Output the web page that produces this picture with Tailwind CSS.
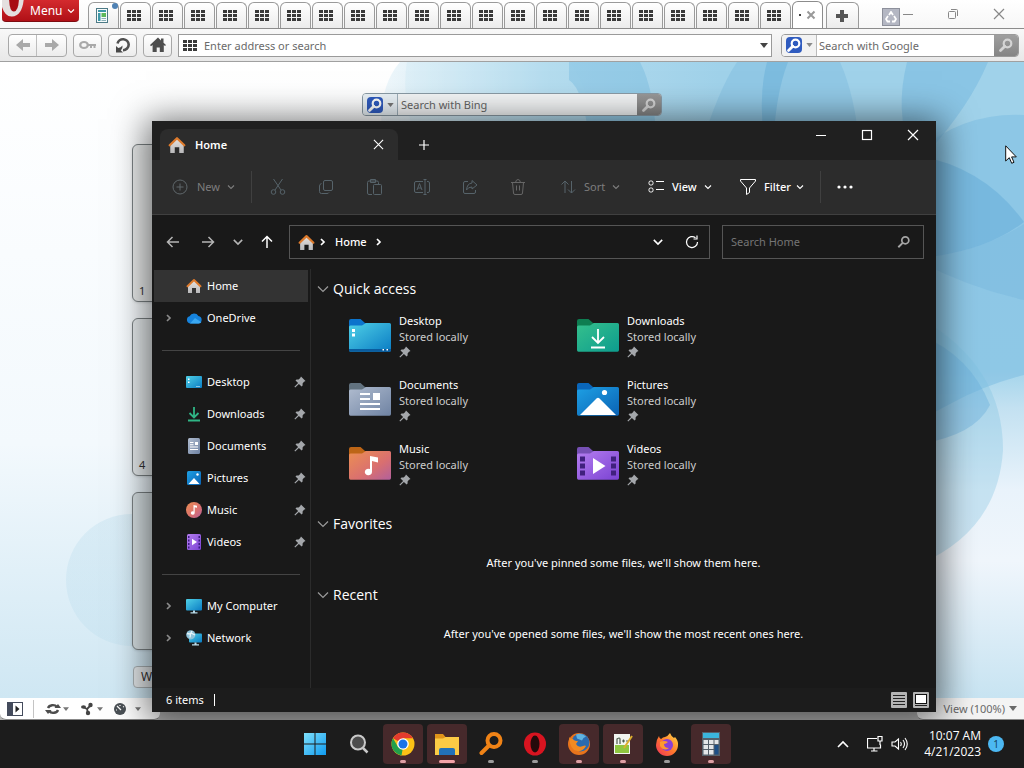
<!DOCTYPE html>
<html lang="en">
<head>
<meta charset="UTF-8">
<meta name="viewport" content="width=device-width, initial-scale=1.0">
<title>Home - File Explorer</title>
<script src="https://cdn.jsdelivr.net/npm/@tailwindcss/browser@4"></script>
</head>
<body class="h-screen flex flex-col overflow-hidden bg-[#1c1c1c] font-['Noto_Sans','Open_Sans',sans-serif] text-[11px] leading-4 text-white">

<!-- Icon sprite -->
<svg class="absolute size-0" aria-hidden="true">
  <defs>
    <linearGradient id="gDesk" x1="0" y1="0" x2="1" y2="1"><stop offset="0" stop-color="#4fd0e6"/><stop offset="1" stop-color="#0a7cc4"/></linearGradient>
    <linearGradient id="gDown" x1="0" y1="0" x2="1" y2="1"><stop offset="0" stop-color="#35c08c"/><stop offset="1" stop-color="#0d9c8e"/></linearGradient>
    <linearGradient id="gDocs" x1="0" y1="0" x2="1" y2="1"><stop offset="0" stop-color="#b0bccf"/><stop offset="1" stop-color="#6f83a3"/></linearGradient>
    <linearGradient id="gPics" x1="0" y1="0" x2="1" y2="1"><stop offset="0" stop-color="#1ea0e4"/><stop offset="1" stop-color="#0a62b4"/></linearGradient>
    <linearGradient id="gMusic" x1="0" y1="0" x2="1" y2="1"><stop offset="0" stop-color="#ec8f52"/><stop offset=".6" stop-color="#d96f70"/><stop offset="1" stop-color="#b2609c"/></linearGradient>
    <linearGradient id="gVids" x1="0" y1="0" x2="1" y2="1"><stop offset="0" stop-color="#b57ef0"/><stop offset="1" stop-color="#7a42d2"/></linearGradient>
    <linearGradient id="gWin" x1="0" y1="0" x2="1" y2="1"><stop offset="0" stop-color="#7fe0fb"/><stop offset="1" stop-color="#0f9bf0"/></linearGradient>
    <linearGradient id="gFox" x1="1" y1="0" x2="0" y2="1"><stop offset="0" stop-color="#ffe04a"/><stop offset=".5" stop-color="#ff7a2c"/><stop offset="1" stop-color="#f0305c"/></linearGradient>
    <linearGradient id="gHouse" x1="0" y1="0" x2="0" y2="1"><stop offset="0" stop-color="#e8e2de"/><stop offset="1" stop-color="#b9b9bb"/></linearGradient>
  </defs>
  <symbol id="grid9" viewBox="0 0 14 11"><path fill="#3a3a3a" d="M0 0h4v3H0zM5 0h4v3H5zM10 0h4v3h-4zM0 4h4v3H0zM5 4h4v3H5zM10 4h4v3h-4zM0 8h4v3H0zM5 8h4v3H5zM10 8h4v3h-4z"/></symbol>
  <symbol id="mag" viewBox="0 0 16 16"><circle cx="9.500" cy="6.500" r="3.800" fill="none" stroke="currentColor" stroke-width="2.200"/><path d="M6.800 9.200 2.500 13.500" stroke="currentColor" stroke-width="2.800" stroke-linecap="round"/></symbol>
  <symbol id="chevD" viewBox="0 0 10 10"><path d="M2 3.500 5 6.500 8 3.500" fill="none" stroke="currentColor" stroke-width="1.100"/></symbol>
  <symbol id="chevR" viewBox="0 0 10 10"><path d="M3 2 6 5 3 8" fill="none" stroke="currentColor" stroke-width="1.700"/></symbol>
  <symbol id="tri" viewBox="0 0 8 5"><path d="M0 0h8L4 5z" fill="currentColor"/></symbol>
  <symbol id="pin" viewBox="0 0 12 12"><path fill="#a4a7ab" d="M7 .5 11.500 5 10 5.800 8.600 7.400V9.500l-1 1L4.900 7.900 1.200 11.600.4 10.800 4.100 7.100 1.500 4.400l1-1H4.600L6.200 2z"/></symbol>
  <symbol id="close" viewBox="0 0 12 12"><path d="M1 1 11 11M11 1 1 11" fill="none" stroke="currentColor" stroke-width="1.200"/></symbol>
  <symbol id="house" viewBox="0 0 16 16"><path fill="url(#gHouse)" d="M2 7.500 8 2l6 5.500V15H10V10H6v5H2z"/><path d="M1.500 8.200 8 2l6.500 6.200" fill="none" stroke="#dd7a2c" stroke-width="2" stroke-linecap="round" stroke-linejoin="round"/></symbol>
  <symbol id="arrow" viewBox="0 0 14 14"><path d="M13 7H1.500M6.500 2 1.500 7l5 5" fill="none" stroke="currentColor" stroke-width="1.500"/></symbol>
  <symbol id="fatArrow" viewBox="0 0 14 12"><path d="M0 6 7 0v4h7v4H7v4z" fill="#a9a9a9"/></symbol>
  <symbol id="cloud" viewBox="0 0 16 12"><path fill="#1683dd" d="M4 11.500a3.700 3.700 0 0 1-.4-7.200A5 5 0 0 1 12.400 4a3.800 3.800 0 0 1 .1 7.500z"/><path fill="#3aa8f2" d="M4 11.500 9 6l6.300 4.300a3.800 3.800 0 0 1-2.800 1.200z"/></symbol>
  <symbol id="sDesk" viewBox="0 0 16 16"><rect y="2" width="16" height="12" rx="1" fill="url(#gDesk)"/><path fill="#fff" d="M2 4.500h1.500V6H2zM2 7.500h1.500V9H2zM10.500 12h1v1h-1zM12.500 12h1v1h-1z"/></symbol>
  <symbol id="sDown" viewBox="0 0 16 16"><path d="M8 1v10M3.500 7 8 11.500 12.500 7M2 14.500h12" fill="none" stroke="#2fb585" stroke-width="1.800"/></symbol>
  <symbol id="sDocs" viewBox="0 0 16 16"><rect x="2" width="12" height="16" rx="1.500" fill="url(#gDocs)"/><path fill="#fff" d="M4 4h3.500v1H4zM4 6.200h3.500v1H4zM9 4h3v3H9zM4 8.500h8v1H4zM4 11h8v1H4z"/></symbol>
  <symbol id="sPics" viewBox="0 0 16 16"><rect x="1" y="1" width="14" height="14" rx="1.500" fill="url(#gPics)"/><path fill="#fff" d="M2.500 14 8 8l5.500 6z"/><circle cx="11.500" cy="4.500" r="1.200" fill="#fff"/></symbol>
  <symbol id="sMusic" viewBox="0 0 16 16"><circle cx="8" cy="8" r="8" fill="url(#gMusic)"/><path fill="#fff" d="M7.500 3 11 3.800v2L8.700 5.200V11a1.900 1.700 0 1 1-1.200-1.600z"/></symbol>
  <symbol id="sVids" viewBox="0 0 16 16"><rect x="1" width="14" height="16" rx="1.500" fill="url(#gVids)"/><path fill="#3c1c80" d="M2 2h1.500v2H2zM2 5.500h1.500v2H2zM2 9h1.500v2H2zM2 12.500h1.500v2H2zM12.500 2H14v2h-1.500zM12.500 5.500H14v2h-1.500zM12.500 9H14v2h-1.500zM12.500 12.500H14v2h-1.500z"/><path fill="#fff" d="M6 4.800 11 8 6 11.200z"/></symbol>
  <symbol id="sPc" viewBox="0 0 16 16"><rect y="1" width="16" height="11.500" rx="1" fill="url(#gDesk)"/><path fill="#b9dcea" d="M7 12.500h2v2H7zM4.500 14.200h7v1.300h-7z"/></symbol>
  <symbol id="sNet" viewBox="0 0 16 16"><rect x="3" y="3.500" width="13" height="9" rx="1" fill="url(#gDesk)"/><path fill="#b9dcea" d="M8.500 12.500h2v2h-2zM6 14.200h7v1.300H6z"/><circle cx="4.800" cy="4.800" r="4.600" fill="#8fc3da"/><path d="M1 3.500 4.500 4 4 7.500M6 1l-1 2 4 2" fill="none" stroke="#e6f4fa" stroke-width="1.300"/></symbol>
  <symbol id="fDesk" viewBox="0 0 42 33"><path fill="#0c74cc" d="M0 2a2 2 0 0 1 2-2H11.500l4.500 4H40v10H0z"/><path fill="url(#gDesk)" d="M0 8q0-1.500 1.500-1.500H13L17 4H40.500Q42 4 42 5.500V31q0 1.700-1.500 1.700H1.500Q0 32.700 0 31z"/><path fill="#0a5c9e" d="M0 30h42v1.200q0 1.500-1.500 1.500H1.500Q0 32.700 0 31.200z"/><path fill="#fff" d="M3 10h3v3H3zM3 14.500h3v3H3zM33.500 30h1.500v1.500h-1.500zM37.500 30h1.500v1.500h-1.500z"/></symbol>
  <symbol id="fDown" viewBox="0 0 42 33"><path fill="#0e7d51" d="M0 2a2 2 0 0 1 2-2H11.500l4.500 4H40v10H0z"/><path fill="url(#gDown)" d="M0 8q0-1.500 1.500-1.500H13L17 4H40.500Q42 4 42 5.500V31q0 1.700-1.500 1.700H1.500Q0 32.700 0 31z"/><path d="M21 10v13.500M15 18l6 6 6-6M14 28.500h14" fill="none" stroke="#fff" stroke-width="1.800"/></symbol>
  <symbol id="fDocs" viewBox="0 0 42 33"><path fill="#62727f" d="M0 2a2 2 0 0 1 2-2H11.500l4.500 4H40v10H0z"/><path fill="url(#gDocs)" d="M0 8q0-1.500 1.500-1.500H13L17 4H40.500Q42 4 42 5.500V31q0 1.700-1.500 1.700H1.500Q0 32.700 0 31z"/><path fill="#fff" d="M11 10h10v2H11zM11 15h10v2H11zM24 10h7v7h-7zM11 20h20v2H11zM11 25h20v2H11z"/></symbol>
  <symbol id="fPics" viewBox="0 0 42 33"><path fill="#0a66ba" d="M0 2a2 2 0 0 1 2-2H11.500l4.500 4H40v10H0z"/><path fill="url(#gPics)" d="M0 8q0-1.500 1.500-1.500H13L17 4H40.500Q42 4 42 5.500V31q0 1.700-1.500 1.700H1.500Q0 32.700 0 31z"/><path fill="#fff" d="M3 32 19.500 15.500q1.500-1.500 3 0L39 32z"/><circle cx="27.500" cy="9.500" r="2.600" fill="#fff"/></symbol>
  <symbol id="fMusic" viewBox="0 0 42 33"><path fill="#bd6516" d="M0 2a2 2 0 0 1 2-2H11.500l4.500 4H40v10H0z"/><path fill="url(#gMusic)" d="M0 8q0-1.500 1.500-1.500H13L17 4H40.500Q42 4 42 5.500V31q0 1.700-1.500 1.700H1.500Q0 32.700 0 31z"/><path fill="#fff" d="M21 9 29 10.500v5L23 14V25a3.600 3.300 0 1 1-2-3z"/></symbol>
  <symbol id="fVids" viewBox="0 0 42 33"><path fill="#7650b4" d="M0 2a2 2 0 0 1 2-2H11.500l4.500 4H40v10H0z"/><path fill="url(#gVids)" d="M0 8q0-1.500 1.500-1.500H13L17 4H40.500Q42 4 42 5.500V31q0 1.700-1.500 1.700H1.500Q0 32.700 0 31z"/><path fill="#40207e" d="M3 9.500h5v5H3zM3 16.500h5v5H3zM3 23.500h5v5H3zM34 9.500h5v5h-5zM34 16.500h5v5h-5zM34 23.500h5v5h-5z"/><path fill="#fff" d="M16 11 28.500 19 16 27z"/></symbol>
</svg>

<!-- Browser window -->
<div class="relative flex-1 min-h-0 flex flex-col bg-white text-[#6a6a6a]">

  <!-- Tab strip -->
  <header class="flex h-[29px] shrink-0 items-end border-b border-[#8c8c8c] bg-gradient-to-b from-white to-[#f7f7f7]">
    <button class="ml-0.5 mr-[9px] flex h-[22px] w-[77px] shrink-0 items-center self-start overflow-hidden rounded-b-sm border-b border-[#7d0b10] bg-gradient-to-b from-[#d42a2e] to-[#b00f16] text-white">
      <svg class="h-[22px] w-[26px]" viewBox="0 0 26 22"><path d="M-2-4Q0 17 10 16.500 21 16 22-4" fill="#e4dfdf"/><path d="M7-4q0 16 5 15.500T17-4" fill="#a80d14"/></svg>
      <span class="ml-0.5 text-[12px]">Menu</span>
      <svg class="ml-1 size-2.5"><use href="#chevD"/></svg>
    </button>
    <div id="tabs" class="flex shrink-0 items-end gap-px">
      <button aria-label="Speed Dial" class="relative flex h-[26px] w-[31px] items-center justify-center rounded-t-md border border-b-0 border-[#9a9a9a] bg-gradient-to-b from-white to-[#ececec] pr-1">
        <svg class="h-[15px] w-3" viewBox="0 0 12 15"><rect x=".5" y=".5" width="11" height="14" fill="#f7fbfb" stroke="#4d7a86"/><path fill="#3d98a8" d="M2 2h8v2H2zM2 5h2.500v8H2z"/><path fill="#5cb85a" d="M5.500 5H10v4H5.500z"/><path stroke="#8ab0b8" d="M5.500 10.500H10M5.500 12.500H10"/></svg>
        <span class="absolute right-0 top-0 size-1.5 rounded-full bg-[#4f82b4]"></span>
      </button>
    </div>
    <div class="ml-px flex h-[27px] w-[31px] shrink-0 items-center justify-between rounded-t-md border border-b-0 border-[#8c8c8c] bg-white px-1.5">
      <span class="size-0.5 bg-[#444]"></span>
      <button aria-label="Close tab"><svg class="size-2.5 text-[#999]" viewBox="0 0 10 10"><path d="M1.500 1.500l7 7M8.500 1.500l-7 7" stroke="currentColor" stroke-width="2"/></svg></button>
    </div>
    <button aria-label="New tab" class="ml-[3px] flex h-[26px] w-[33px] shrink-0 items-center justify-center rounded-t-md border border-b-0 border-[#9a9a9a] bg-gradient-to-b from-white to-[#ececec] pr-0.5">
      <svg class="size-3" viewBox="0 0 12 12"><path d="M4 0h4v4h4v4H8v4H4V8H0V4h4z" fill="#555"/></svg>
    </button>
    <div class="ml-auto flex items-center self-start pr-[19px] text-[#888]">
      <button aria-label="Closed tabs" class="mt-[7px] flex size-[18px] items-center justify-center border border-[#8d909b] bg-[#b4b7c3]">
        <svg class="size-3" viewBox="0 0 12 12"><path d="M4 4 6 1 8 4M9 5l2 3-1.500 2.500H7M5 10.500H2.500L1 8l2-3" fill="none" stroke="#fff" stroke-width="1.800"/></svg>
      </button>
      <button aria-label="Minimize" class="ml-0.5 flex h-[27px] w-4 items-center"><svg class="size-3" viewBox="0 0 12 12"><path d="M1 6.500h10" stroke="currentColor"/></svg></button>
      <button aria-label="Restore" class="ml-[29px] flex h-[27px] w-4 items-center"><svg class="size-3" viewBox="0 0 12 12"><rect x="1.500" y="3.500" width="7" height="7" rx="1" fill="none" stroke="currentColor"/><path d="M4 1.500h5.500q1 0 1 1V8" fill="none" stroke="currentColor"/></svg></button>
      <button aria-label="Close" class="ml-[30px] flex h-[27px] w-3 items-center"><svg class="size-3"><use href="#close"/></svg></button>
    </div>
  </header>

  <!-- Address bar -->
  <div class="flex h-[33px] shrink-0 items-center gap-1.5 border-b border-[#a0a0a0] bg-gradient-to-b from-[#f8f8f8] to-[#e8e8e8] pl-2 pr-[5px]">
    <div class="flex h-[23px] rounded border border-[#a8a8a8] bg-gradient-to-b from-white to-[#ececec]">
      <button aria-label="Back" class="flex w-7 items-center justify-center border-r border-[#bdbdbd]"><svg class="h-3 w-3.5"><use href="#fatArrow"/></svg></button>
      <button aria-label="Forward" class="flex w-[29px] items-center justify-center"><svg class="h-3 w-3.5 rotate-180"><use href="#fatArrow"/></svg></button>
    </div>
    <button aria-label="Key" class="flex h-[23px] w-[29px] items-center justify-center rounded border border-[#a8a8a8] bg-gradient-to-b from-white to-[#ececec]"><svg class="h-3 w-[18px]" viewBox="0 0 18 12"><ellipse cx="5" cy="6" rx="3.800" ry="3" fill="none" stroke="#a9a9a9" stroke-width="2.200"/><path d="M9 6h8M12 6v3M15.500 6v3" stroke="#a9a9a9" stroke-width="2"/></svg></button>
    <button aria-label="Reload" class="flex h-[23px] w-[29px] items-center justify-center rounded border border-[#a8a8a8] bg-gradient-to-b from-white to-[#ececec]"><svg class="size-4" viewBox="0 0 16 16"><path d="M2.500 6.500A5.700 5.700 0 0 1 13.700 7.500 5.700 5.700 0 0 1 8 13.200" fill="none" stroke="#505050" stroke-width="2.600"/><path d="M1 15.500V9l2.300 2q2.500-.5 4.200-2.500.5 3-1.700 5L8 15.500z" fill="#484848"/></svg></button>
    <button aria-label="Home" class="flex h-[23px] w-[29px] items-center justify-center rounded border border-[#a8a8a8] bg-gradient-to-b from-white to-[#ececec]"><svg class="size-4" viewBox="0 0 16 16"><path fill="#4d4d4d" d="M8 .5 11 3.400V1.500h2.500v4.200L16 8l-1 1-1.200-.9V15H9.800v-4.500H6.700V15H2.600V8.100L1 9.200 0 8z"/></svg></button>
    <div class="flex h-[23px] flex-1 items-center border border-[#9a9a9a] bg-white pl-1 pr-[3px]">
      <svg class="h-[11px] w-3.5"><use href="#grid9"/></svg>
      <input type="text" aria-label="Address" placeholder="Enter address or search" class="ml-[7px] h-full flex-1 bg-transparent outline-none placeholder:text-[#6a6a6a]">
      <button aria-label="History"><svg class="h-[5px] w-2 text-[#444]"><use href="#tri"/></svg></button>
    </div>
    <div class="ml-[3px] flex h-[23px] w-[238px] items-center overflow-hidden rounded border border-[#9a9a9a] bg-white">
      <button aria-label="Search engine" class="flex h-full w-[35px] items-center gap-1 border-r border-[#bbb] bg-[#f2f2f2] pl-1"><svg class="size-4 rounded-sm bg-[#2f5bbf] text-white"><use href="#mag"/></svg><svg class="h-1 w-[7px] text-[#8a8a8a]"><use href="#tri"/></svg></button>
      <input type="text" aria-label="Search with Google" placeholder="Search with Google" class="h-full min-w-0 flex-1 pl-0.5 outline-none placeholder:text-[#6a6a6a]">
      <button aria-label="Search" class="flex h-full w-6 items-center justify-center bg-gradient-to-b from-[#9f9f9f] to-[#858585] text-[#d4d4d4]"><svg class="size-4"><use href="#mag"/></svg></button>
    </div>
  </div>

  <!-- Speed dial page -->
  <main class="relative min-h-0 flex-1 overflow-hidden bg-gradient-to-b from-white via-[#f3f9fd] via-60% to-[#cfe7f3]">
    <svg class="absolute inset-0 h-full w-full" viewBox="0 62 1024 636" preserveAspectRatio="none">
      <defs>
        <linearGradient id="wTop" gradientUnits="userSpaceOnUse" x1="380" x2="720" y1="0" y2="0"><stop offset="0" stop-color="#a0d2ea" stop-opacity=".15"/><stop offset=".5" stop-color="#a0d2ea" stop-opacity=".8"/><stop offset="1" stop-color="#a0d2ea"/></linearGradient>
        <linearGradient id="wRight" gradientUnits="userSpaceOnUse" x1="0" x2="0" y1="150" y2="698"><stop offset="0" stop-color="#a0d2ea"/><stop offset=".4" stop-color="#a3d4eb"/><stop offset=".47" stop-color="#c3e1f1"/><stop offset=".62" stop-color="#e9f3fb"/><stop offset=".75" stop-color="#f0f6fc"/><stop offset="1" stop-color="#c8e4f2"/></linearGradient>
        <linearGradient id="wBall" x1="0" x2="0" y1="0" y2="1"><stop offset="0" stop-color="#a9d4e8" stop-opacity=".25"/><stop offset="1" stop-color="#a9d4e8" stop-opacity=".2"/></linearGradient>
      </defs>
      <path d="M384 150Q374 92 400 62H1024V150z" fill="url(#wTop)"/>
      <rect x="920" y="150" width="104" height="548" fill="url(#wRight)"/>
      <path d="M407 62Q400 100 420 150H600Q590 90 570 62z" fill="#b9dff0" opacity=".2"/>
      <path d="M569 62H640Q655 90 657 150H590Q585 90 569 80z" fill="#74b8de" opacity=".4"/>
      <path d="M737 62H840Q855 95 860 150H700Q718 90 737 62z" fill="#7ebce0" opacity=".45"/>
      <path d="M767 62H788Q775 95 773 150H766Q757 100 767 62z" fill="#5fa9d6" opacity=".4"/>
      <path d="M907 62H988Q970 105 930 150H910Q895 110 907 62z" fill="#78b9e0" opacity=".55"/>
      <path d="M920 150Q965 112 1024 115V375Q985 385 950 404L920 420z" fill="#7dbde1" opacity=".55"/>
      <path d="M920 156Q985 168 1024 222Q985 252 920 258z" fill="#5fa8d7" opacity=".45"/>
      <path d="M920 258Q980 252 1024 224V300Q970 288 920 262z" fill="#6cb1dc" opacity=".3"/>
      <path d="M920 318Q1003 365 1003 450Q998 530 920 564z" fill="#7dc0e0" opacity=".32"/>
      <path d="M920 335Q970 355 990 405Q975 435 920 444z" fill="#69aedb" opacity=".4"/>
      <circle cx="132" cy="580" r="66" fill="url(#wBall)"/>
    </svg>
    <div class="relative mx-auto mt-[31px] flex h-[23px] w-[300px] items-center overflow-hidden rounded border border-[#8a9aa5] bg-[#f4f6f7]">
      <button aria-label="Search engine" class="flex h-full w-[35px] items-center gap-1 border-r border-[#9fb0bb] bg-[#eaf2f7] pl-1"><svg class="size-4 rounded-sm bg-[#2f5bbf] text-white"><use href="#mag"/></svg><svg class="h-1 w-[7px] text-[#777]"><use href="#tri"/></svg></button>
      <input type="text" aria-label="Search with Bing" placeholder="Search with Bing" class="h-full min-w-0 flex-1 pl-[3px] outline-none placeholder:text-[#666]">
      <button aria-label="Search" class="flex h-full w-6 items-center justify-center bg-gradient-to-b from-[#999] to-[#858585] text-[#d4d4d4]"><svg class="size-4"><use href="#mag"/></svg></button>
    </div>
    <div class="relative mx-[132px] mt-7 grid grid-cols-3 gap-4 text-[#333]">
      <div class="flex h-[158px] items-end rounded-md border border-[#7c8385] bg-[#eceeee] px-1.5 py-0.5 shadow">1</div>
      <div class="h-[158px]"></div><div class="h-[158px]"></div>
      <div class="flex h-[158px] items-end rounded-md border border-[#7c8385] bg-[#e8edef] px-1.5 py-0.5 shadow">4</div>
      <div class="h-[158px]"></div><div class="h-[158px]"></div>
      <div class="h-[158px] rounded-md border border-[#7c8385] bg-[#d8e1e4] shadow"></div>
    </div>
    <button class="relative ml-[133px] mt-4 block h-[22px] w-20 rounded border border-[#a9b0b3] bg-[#e4e8ea] pl-[7px] text-left text-[12px] text-[#333]">Widgets</button>
  </main>

  <!-- Browser status bar -->
  <footer class="flex h-[22px] shrink-0 justify-between bg-[#b4b4b4]">
    <div class="flex w-[160px] items-center rounded-b-md border-b border-[#888] bg-white pl-[7px] text-[#777]">
      <button aria-label="Panels"><svg class="h-3.5 w-4" viewBox="0 0 16 14"><rect x=".5" y=".5" width="15" height="13" fill="#fff" stroke="#444b5c"/><path fill="#444b5c" d="M1 1h5v12H1z"/><path fill="#222" d="M8.500 3.500 12.500 7l-4 3.500z"/></svg></button>
      <span class="mx-2.5 h-[18px] w-px bg-[#c4c4c4]"></span>
      <button aria-label="Sync" class="ml-px flex items-center gap-0.5"><svg class="h-3.5 w-4" viewBox="0 0 16 14"><path d="M3 6a5 4 0 0 1 9-1M13 8a5 4 0 0 1-9 1" fill="none" stroke="#4d4d4d" stroke-width="2.400"/><path fill="#4d4d4d" d="M9.500 6H16l-3-4zM0 8h6.500L3 12z"/></svg><svg class="h-1 w-1.5"><use href="#tri"/></svg></button>
      <button aria-label="Unite" class="ml-3 flex items-center gap-1"><svg class="h-3.5 w-3" viewBox="0 0 12 14"><path d="M6 7 2 5M6 7l4-4M6 7l1 4" stroke="#444" stroke-width="1.800"/><ellipse cx="2.500" cy="5" rx="2.500" ry="1.800" fill="#444"/><circle cx="9.500" cy="3" r="2.200" fill="#444"/><circle cx="7" cy="11" r="2.200" fill="#444"/></svg><svg class="h-1 w-1.5"><use href="#tri"/></svg></button>
      <button aria-label="Turbo" class="ml-2.5 flex items-center gap-2"><svg class="size-3.5" viewBox="0 0 14 14"><circle cx="7" cy="7" r="6" fill="#4a5055"/><path d="M4 4l4 4M3 8h1M7 3v1M10 5l1-.5" stroke="#fff" stroke-width="1.200"/></svg><svg class="h-1 w-1.5"><use href="#tri"/></svg></button>
    </div>
    <div class="flex w-[107px] items-center justify-end rounded-bl-md border-b border-[#888] bg-[#f4f4f4] pr-[7px] text-[#6a6a6a]">
      <button class="flex items-center gap-1">View (100%) <svg class="h-[5px] w-2"><use href="#tri"/></svg></button>
    </div>
  </footer>

  <!-- Explorer window -->
  <section class="absolute bottom-2 left-[152px] right-[88px] top-[121px] flex flex-col bg-[#191919] text-white shadow-[0_4px_32px_6px_rgba(0,0,0,0.55)]">
    <div class="flex h-[39px] shrink-0 items-end bg-[#202020] pl-2">
      <div class="flex h-[31px] w-[238px] items-center rounded-t-lg bg-[#2c2c2c] pl-2 pr-3.5">
        <svg class="size-[18px]"><use href="#house"/></svg>
        <span class="ml-[9px] font-semibold">Home</span>
        <button aria-label="Close tab" class="ml-auto"><svg class="size-[11px]"><use href="#close"/></svg></button>
      </div>
      <button aria-label="New tab" class="ml-5 flex h-[31px] items-center"><svg class="size-3" viewBox="0 0 12 12"><path d="M6 1v10M1 6h10" stroke="currentColor" stroke-width="1.200"/></svg></button>
      <div class="ml-auto flex items-center gap-[34px] self-start pr-[17px] pt-2">
        <button aria-label="Minimize"><svg class="size-3" viewBox="0 0 12 12"><path d="M1 6.500h10" stroke="currentColor"/></svg></button>
        <button aria-label="Maximize"><svg class="size-3" viewBox="0 0 12 12"><rect x="1.500" y="1.500" width="9" height="9" fill="none" stroke="currentColor" stroke-width="1.200"/></svg></button>
        <button aria-label="Close"><svg class="size-3"><use href="#close"/></svg></button>
      </div>
    </div>

    <div class="flex h-[55px] shrink-0 items-center border-b border-[#404040] bg-[#2c2c2c] pl-5 text-[#56636a]">
      <button class="flex w-[79px] items-center text-[#7d7d7d]"><svg class="mr-[9px] size-4 text-[#5f676b]" viewBox="0 0 16 16"><circle cx="8" cy="8" r="7" fill="none" stroke="currentColor"/><path d="M8 4.500v7M4.500 8h7" stroke="currentColor"/></svg>New<svg class="ml-1.5 size-2.5"><use href="#chevD"/></svg></button>
      <span class="mr-0.5 h-8 w-px bg-[#404040]"></span>
      <button aria-label="Cut" class="flex w-12 justify-center"><svg class="size-4" viewBox="0 0 16 16"><path d="M3.500 0 11 11M12.500 0 5 11" stroke="currentColor"/><circle cx="3.500" cy="13" r="2.300" fill="none" stroke="currentColor"/><circle cx="12.500" cy="13" r="2.300" fill="none" stroke="currentColor"/></svg></button>
      <button aria-label="Copy" class="flex w-12 justify-center"><svg class="size-4" viewBox="0 0 16 16"><rect x="5.500" y="1.500" width="9" height="10" rx="1.500" fill="none" stroke="currentColor"/><path d="M3.500 4.500Q1.500 5 1.500 7v5.500q0 2 2 2H9q1.500 0 2-1" fill="none" stroke="currentColor"/></svg></button>
      <button aria-label="Paste" class="flex w-12 justify-center"><svg class="size-4" viewBox="0 0 16 16"><path d="M6 15.500H3q-1.500 0-1.500-1.500V3.500Q1.500 2 3 2h8q1.500 0 1.500 1.500V5M4.500.5h5v3h-5z" fill="none" stroke="currentColor"/><rect x="7.500" y="5.500" width="8" height="10" rx="1" fill="none" stroke="currentColor"/></svg></button>
      <button aria-label="Rename" class="flex w-12 justify-center"><svg class="size-4" viewBox="0 0 16 16"><path d="M9 13.500H2q-1.500 0-1.500-1.500V4q0-1.500 1.500-1.500h7M13 2.500h1q1.500 0 1.500 1.500v8q0 1.500-1.500 1.500h-1M11 1v14M9.500.5h3M9.500 15.500h3M3 11l2.500-6.500L8 11M4 9h3" fill="none" stroke="currentColor"/></svg></button>
      <button aria-label="Share" class="flex w-12 justify-center"><svg class="size-4" viewBox="0 0 16 16"><path d="M6 2.500H3Q1.500 2.500 1.500 4v9q0 1.500 1.500 1.500h9q1.500 0 1.500-1.500v-2M10 1.500 15 6l-5 4V8Q6 8 4.500 11 5 4.500 10 4z" fill="none" stroke="currentColor"/></svg></button>
      <button aria-label="Delete" class="flex w-12 justify-center"><svg class="size-4 text-[#666]" viewBox="0 0 16 16"><path d="M1 3.500h14M5.500 3.500Q6 .5 8 .5t2.500 3M2.500 3.500 3.500 14q0 1.500 1.500 1.500h6q1.500 0 1.500-1.500l1-10.500M6.500 6.500v5M9.500 6.500v5" fill="none" stroke="currentColor"/></svg></button>
      <button class="ml-[18px] flex w-[88px] items-center text-[#7d7d7d]"><svg class="mr-2 size-4 text-[#56636a]" viewBox="0 0 16 16"><path d="M5 14V2M1.500 5.500 5 2l3.500 3.500M11.500 2v12M8 10.500l3.500 3.500 3.500-3.500" fill="none" stroke="currentColor"/></svg>Sort<svg class="ml-1.5 size-2.5"><use href="#chevD"/></svg></button>
      <button class="flex w-[92px] items-center font-medium text-white"><svg class="mr-2 size-4" viewBox="0 0 16 16"><rect x="1" y="2" width="4" height="4" rx="1.500" fill="none" stroke="currentColor"/><rect x="1" y="9" width="4" height="4" rx="1.500" fill="none" stroke="currentColor"/><path d="M8 2.500h8M8 10.500h8" stroke="currentColor"/></svg>View<svg class="ml-1.5 size-2.5"><use href="#chevD"/></svg></button>
      <button class="flex w-20 items-center font-medium text-white"><svg class="mr-2 size-4" viewBox="0 0 16 16"><path d="M.5.500h15v1.500L9.500 9v4.500L6.500 15.500V9L.5 2z" fill="none" stroke="currentColor"/></svg>Filter<svg class="ml-1 size-2.5"><use href="#chevD"/></svg></button>
      <span class="h-8 w-px bg-[#404040]"></span>
      <button aria-label="More" class="ml-4 text-white"><svg class="size-4" viewBox="0 0 16 16"><circle cx="2" cy="8" r="1.600" fill="currentColor"/><circle cx="8" cy="8" r="1.600" fill="currentColor"/><circle cx="14" cy="8" r="1.600" fill="currentColor"/></svg></button>
    </div>

    <div class="flex h-[54px] shrink-0 items-center pl-3.5 pr-3">
      <button aria-label="Back" class="text-[#b5b5b5]"><svg class="size-3.5"><use href="#arrow"/></svg></button>
      <button aria-label="Forward" class="ml-[21px] text-[#b5b5b5]"><svg class="size-3.5 rotate-180"><use href="#arrow"/></svg></button>
      <button aria-label="Recent locations" class="ml-4 text-[#b5b5b5]"><svg class="size-3.5"><use href="#chevD"/></svg></button>
      <button aria-label="Up" class="ml-[15px]"><svg class="size-3.5 rotate-90"><use href="#arrow"/></svg></button>
      <div class="ml-[15px] flex h-[34px] flex-1 items-center border border-[#555] pl-2 pr-2.5">
        <svg class="size-[17px]"><use href="#house"/></svg>
        <svg class="ml-[3px] size-2.5"><use href="#chevR"/></svg>
        <a href="#" class="ml-[7px] font-medium">Home</a>
        <svg class="ml-[7px] size-2.5"><use href="#chevR"/></svg>
        <button aria-label="Previous locations" class="ml-auto"><svg class="size-3.5"><use href="#chevD"/></svg></button>
        <button aria-label="Refresh" class="ml-5"><svg class="size-3.5" viewBox="0 0 14 14"><path d="M12.500 7A5.500 5.500 0 1 1 10.500 2.800M12 .5v3.500H8.500" fill="none" stroke="currentColor" stroke-width="1.200"/></svg></button>
      </div>
      <div class="ml-3 flex h-[34px] w-[202px] items-center border border-[#555] pl-2 pr-3">
        <input type="search" aria-label="Search Home" placeholder="Search Home" class="min-w-0 flex-1 bg-transparent outline-none placeholder:text-[#757575]">
        <svg class="size-3.5 text-[#a5a5a5]" viewBox="0 0 16 16"><circle cx="9.500" cy="6" r="4" fill="none" stroke="currentColor" stroke-width="2"/><path d="M6.500 9 1.500 14" stroke="currentColor" stroke-width="2.200"/></svg>
      </div>
    </div>

    <div class="flex min-h-0 flex-1">
      <!-- Navigation pane -->
      <nav id="nav" class="w-[159px] shrink-0 border-r border-[#2b2b2b] px-0.5 pt-px"></nav>

      <!-- Content -->
      <div class="flex-1 pt-1">
        <h2 class="flex h-8 items-center gap-1 pl-1.5 font-['Open_Sans',sans-serif] text-[14px] leading-5"><svg class="size-3 text-[#9a9a9a]" viewBox="0 0 12 12"><path d="M1 3.500 6 8.500 11 3.500" fill="none" stroke="currentColor" stroke-width="1.200"/></svg>Quick access</h2>
        <div id="tiles" class="mt-2 grid grid-cols-[228px_228px] gap-y-4 pl-[38px]"></div>
        <h2 class="mt-[19px] flex h-8 items-center gap-1 pl-1.5 font-['Open_Sans',sans-serif] text-[14px] leading-5"><svg class="size-3 text-[#9a9a9a]" viewBox="0 0 12 12"><path d="M1 3.500 6 8.500 11 3.500" fill="none" stroke="currentColor" stroke-width="1.200"/></svg>Favorites</h2>
        <p class="pb-2 pt-[15px] text-center">After you've pinned some files, we'll show them here.</p>
        <h2 class="flex h-8 items-center gap-1 pl-1.5 font-['Open_Sans',sans-serif] text-[14px] leading-5"><svg class="size-3 text-[#9a9a9a]" viewBox="0 0 12 12"><path d="M1 3.500 6 8.500 11 3.500" fill="none" stroke="currentColor" stroke-width="1.200"/></svg>Recent</h2>
        <p class="pt-[15px] text-center">After you've opened some files, we'll show the most recent ones here.</p>
      </div>
    </div>

    <div class="flex h-6 shrink-0 items-center bg-[#1c1c1c] pl-3.5 pr-[7px]">
      <span>6 items</span><span class="ml-2.5 h-3 w-px bg-white"></span>
      <button aria-label="Details view" class="ml-auto"><svg class="size-4" viewBox="0 0 16 16"><rect width="16" height="16" rx="1" fill="#b4b4b4"/><path d="M2 3.500h12M2 6.500h12M2 9.500h12M2 12.500h12" stroke="#222"/></svg></button>
      <button aria-label="Large icons view" class="ml-1.5"><svg class="size-4" viewBox="0 0 16 16"><rect width="16" height="16" rx="1" fill="#b4b4b4"/><rect x="2.500" y="2.500" width="11" height="9" fill="#fff" stroke="#111"/><path d="M2 13.500h12" stroke="#222"/></svg></button>
    </div>
  </section>

  <!-- Mouse pointer -->
  <svg class="absolute right-[7px] top-[145px] h-[19px] w-3" viewBox="0 0 12 19"><path d="M.7.8V16L4.300 12.700 6.700 18.300 9 17.300 6.600 11.900H11.300z" fill="#fff" stroke="#111"/></svg>
</div>

<!-- Taskbar -->
<div class="relative grid h-12 shrink-0 grid-cols-[1fr_auto_1fr] items-center bg-[#1c1c1c]">
  <div id="taskbar" class="col-start-2 flex gap-1 pl-0.5"></div>
  <div class="flex items-center justify-end pr-5">
    <button aria-label="Hidden icons"><svg class="h-2 w-3" viewBox="0 0 12 8"><path d="M1 7 6 2l5 5" fill="none" stroke="#fff" stroke-width="1.600"/></svg></button>
    <button aria-label="Network" class="ml-[18px]"><svg class="size-4" viewBox="0 0 16 16"><path d="M10 2.500H.5v9.500h13V8.500M7 12v2.500M4 15h6.500M11 .5h4V5h-4zM13 5v4" fill="none" stroke="#fff" stroke-width="1.200"/></svg></button>
    <button aria-label="Volume" class="ml-2"><svg class="h-4 w-[17px]" viewBox="0 0 17 16"><path d="M1 6h3l3.500-3v10L4 10H1zM9.500 6q1.500 2 0 4M12 4q3 4 0 8M14 2q4.500 6 0 12" fill="none" stroke="#fff" stroke-width="1.100"/></svg></button>
    <button class="ml-4 text-right font-['Open_Sans',sans-serif] text-[12px]">10:07 AM<br>4/21/2023</button>
    <button aria-label="1 notification" class="ml-[7px] flex size-4 items-center justify-center rounded-full bg-[#4cb8f2] text-[10px] text-[#12445f]">1</button>
  </div>
</div>

<script>
// Browser tabs
const tabs = document.getElementById('tabs');
for (let i = 0; i < 21; i++) {
  tabs.insertAdjacentHTML('beforeend', `<button aria-label="Speed Dial" class="flex h-[26px] w-[31px] items-center justify-center rounded-t-md border border-b-0 border-[#9a9a9a] bg-gradient-to-b from-white to-[#ececec] pr-1"><svg class="h-[11px] w-3.5"><use href="#grid9"/></svg></button>`);
}

// Navigation pane: [label, icon, has arrow, pinned]
const nav = [
  ['Home', 'house', false, false], ['OneDrive', 'cloud', true, false], null,
  ['Desktop', 'sDesk', false, true], ['Downloads', 'sDown', false, true], ['Documents', 'sDocs', false, true],
  ['Pictures', 'sPics', false, true], ['Music', 'sMusic', false, true], ['Videos', 'sVids', false, true], null,
  ['My Computer', 'sPc', true, false], ['Network', 'sNet', true, false]
];
document.getElementById('nav').innerHTML = nav.map((n, i) => n === null
  ? '<div class="flex h-8 items-center pl-2 pr-2"><hr class="w-full border-[#444]"></div>'
  : `<a href="#" class="flex h-8 items-center pl-2.5 pr-0.5 ${i === 0 ? 'bg-[#333]' : ''}">
      <span class="w-[22px] text-[#8a8a8a]">${n[2] ? '<svg class="size-2.5"><use href="#chevR"/></svg>' : ''}</span>
      <svg class="mr-[5px] size-4"><use href="#${n[1]}"/></svg>${n[0]}
      ${n[3] ? '<svg class="ml-auto size-3"><use href="#pin"/></svg>' : ''}
    </a>`).join('');

// Quick access folders
const folders = [['Desktop', 'fDesk'], ['Downloads', 'fDown'], ['Documents', 'fDocs'], ['Pictures', 'fPics'], ['Music', 'fMusic'], ['Videos', 'fVids']];
document.getElementById('tiles').innerHTML = folders.map(f => `
  <a href="#" class="flex h-12 gap-2">
    <svg class="mt-1.5 h-[33px] w-[42px]"><use href="#${f[1]}"/></svg>
    <span class="flex flex-col"><span>${f[0]}</span><span class="text-[#ccc]">Stored locally</span><svg class="mt-px size-3"><use href="#pin"/></svg></span>
  </a>`).join('');

// Taskbar apps: [name, state, drawing]
const apps = [
  ['Start', '', '<path fill="url(#gWin)" d="M1 1h10.500v10.500H1zM12.500 1H23v10.500H12.500zM1 12.500h10.500V23H1zM12.500 12.500H23V23H12.500z"/>'],
  ['Search', '', '<circle cx="11" cy="10.500" r="7" fill="#4c4c4c" stroke="#c9c9c9" stroke-width="2"/><path d="M16 16l4.500 4.500" stroke="#c9c9c9" stroke-width="2.500"/>'],
  ['Chrome', 'open', '<circle cx="12" cy="12" r="11.500" fill="#fbc116"/><path fill="#e33b2e" d="M12 12 2 6.300A11.500 11.500 0 0 1 22 6.300H12z"/><path fill="#22a04b" d="M2 6.300 7 15l5 0-1.500 8.400A11.500 11.500 0 0 1 2 6.300z"/><circle cx="12" cy="12" r="5.800" fill="#fff"/><circle cx="12" cy="12" r="4.500" fill="#1a73e8"/>'],
  ['File Explorer', 'active', '<path fill="#e0941a" d="M0 2h8l2.500 3H22v6H0z"/><path fill="#fccb45" d="M0 6.500h8L10.500 5H24v18H0z"/><path fill="#2272b8" d="M4 23v-5q0-2 2-2h12q2 0 2 2v5z"/>'],
  ['Search Everything', 'running', '<circle cx="15" cy="8.500" r="6.500" fill="none" stroke="#f08316" stroke-width="4"/><path d="M10 13.500 2.500 21" stroke="#f08316" stroke-width="4" stroke-linecap="round"/>'],
  ['Opera', 'running', '<ellipse cx="12" cy="12" rx="11" ry="11.500" fill="#d81420"/><ellipse cx="12" cy="12" rx="4.500" ry="8.500" fill="#250a0b"/>'],
  ['Firefox', 'open', '<circle cx="12" cy="12" r="11" fill="#e8741c"/><circle cx="13.500" cy="10.500" r="9" fill="#2a6bb0"/><path fill="#5fb3e0" d="M9 2.500q6-2 10 2-3 1-4 4l-5-2z"/><path fill="#f08a22" d="M2 5q1 2 4 2 1 2 5 2l-2 3q2 4 7 2 2-1 3 0-3 6-9 5-7-1-8-14z"/>'],
  ['Notepad++', 'open', '<path fill="#f2f5f0" d="M3 2h16v20H3z"/><path fill="#8ec63f" d="M4 13h14v8H4z"/><path d="M6 12V7q3-2 3 0v5M11 9h3M12.500 7.500v3M15 9h3" fill="none" stroke="#4c5b4c" stroke-width="1.200"/><path d="M21 4l-8 12" stroke="#dcae2e" stroke-width="2"/>'],
  ['Firefox Nightly', 'running', '<path fill="url(#gFox)" d="M15 1q1 3 4 5l1-1q3.500 4 3 8A11 11 0 0 1 1 13Q1 8 4 4q0 2 2 3 2-2 4-2 3-1 5-4z"/><circle cx="12" cy="13" r="6" fill="#8a3fd6"/><path fill="#ff9a2e" d="M5 10q4-2 8 0-2 2-4 2 0 4 5 4-5 4-9-2z"/>'],
  ['Calculator', 'open', '<rect x="3" y="0" width="18" height="24" fill="#55606a"/><path fill="#3bb5dc" d="M4 1h16v5H4z"/><path fill="#e3e6e8" d="M4.500 8H9v4H4.500zM10 8h4.500v4H10zM4.500 13H9v4H4.500zM10 13h4.500v4H10zM4.500 18H9v4.500H4.500zM10 18h4.500v4.500H10zM15.500 8h4v4h-4z"/><path fill="#1d4f86" d="M15.500 13h4v9.500h-4z"/>']
];
document.getElementById('taskbar').innerHTML = apps.map(a => {
  const lit = a[1] === 'open' || a[1] === 'active';
  const mark = a[1] === 'active' ? 'w-4 bg-[#f3a3a8]' : a[1] === 'open' ? 'w-1.5 bg-[#dda0a4]' : 'w-1.5 bg-[#9b9b9b]';
  return `<button aria-label="${a[0]}" class="relative flex size-10 items-center justify-center rounded ${lit ? 'bg-[#46292b]' : ''}">
    <svg class="size-6" viewBox="0 0 24 24">${a[2]}</svg>
    ${a[1] ? `<span class="absolute bottom-px h-[3px] rounded-full ${mark}"></span>` : ''}
  </button>`;
}).join('');
</script>

</body>
</html>
